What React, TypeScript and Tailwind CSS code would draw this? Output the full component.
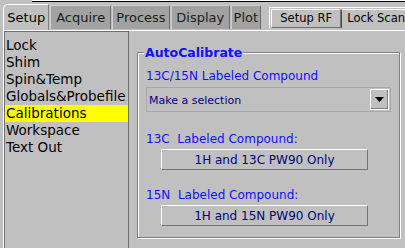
import React from 'react';

const items = ['Lock', 'Shim', 'Spin&Temp', 'Globals&Probefile', 'Calibrations', 'Workspace', 'Text Out'];
const tabs = [
  { label: 'Acquire', w: 'w-[61px]' },
  { label: 'Process', w: 'w-[59px]' },
  { label: 'Display', w: 'w-[59px]' },
  { label: 'Plot', w: 'w-[31px]' },
];

function PanelButton({ label }: { label: string }) {
  return (
    <div className="ml-[15px] w-[207px] h-[21px] flex items-center justify-center border-t border-l border-white border-b border-r border-b-[#747474] border-r-[#747474] bg-[#c0c0c0] text-[12px] leading-[14px] text-[#000080]">
      {label}
    </div>
  );
}

export default function App() {
  return (
    <div className="w-[405px] h-[248px] overflow-hidden bg-[#c0c0c0] flex flex-col" style={{ fontFamily: '"DejaVu Sans", sans-serif' }}>
      {/* strip above the tabs */}
      <div className="flex shrink-0">
        <div className="w-[32px]" />
        <div className="flex-1 border-t border-white border-b border-b-black" />
      </div>

      {/* tab row */}
      <div className="flex items-start h-[28px] pl-[3px] shrink-0">
        <div className="mt-[2px] w-[47px] h-[26px] flex items-center justify-center bg-[#c0c0c0] border-t border-l border-white border-r border-r-[#808080] rounded-tl-[5px] text-[13px] text-black">
          Setup
        </div>
        {tabs.map((t) => (
          <div
            key={t.label}
            className={`${t.w} ml-[1px] mt-[3px] h-[24px] flex items-center justify-center bg-[#a2a2a2] border-t border-l border-[#cfcfcf] border-r border-r-[#6c6c6c] rounded-tr-[2px] text-[13px] text-[#1c1c1c]`}
          >
            {t.label}
          </div>
        ))}
        <div className="ml-[8px] mt-[5px] flex-1 flex border-t border-l border-white pt-[1px] pl-[1px]">
          <div className="w-[70px] h-[19px] flex items-center justify-center border-t border-l border-white border-b border-r border-b-[#6f6f6f] border-r-[#6f6f6f] text-[11.5px] text-black">
            Setup RF
          </div>
          <div className="flex-1 h-[19px] flex items-center pl-[5px] border-t border-white border-l border-l-[#505050] text-[11.5px] text-black whitespace-nowrap">
            Lock Scan
          </div>
        </div>
      </div>

      {/* body */}
      <div className="flex-1 flex ml-[3px] border-t border-l border-white">
        <div className="w-[125px] border-t border-l border-r border-[#6e6e6e] pt-[5px] flex flex-col">
          {items.map((it) => (
            <div
              key={it}
              className={`h-[17px] leading-[17px] pl-[1px] text-[13.5px] text-black whitespace-nowrap ${it === 'Calibrations' ? 'bg-[#ffff00]' : ''}`}
            >
              {it}
            </div>
          ))}
        </div>

        <div className="flex-1 pl-[8px] pt-[14px]">
          <fieldset className="w-[263px] h-[193px] border border-[#808080] shadow-[1px_1px_0_#ffffff,inset_1px_1px_0_#ffffff]">
            <legend className="ml-[6px] px-[1px] bg-[#c0c0c0] text-[12.5px] leading-[15px] font-bold text-[#1010ff]">
              AutoCalibrate
            </legend>
            <div className="flex flex-col px-[8px]">
              <div className="mt-[9px] text-[12px] leading-[14px] text-[#1010ff]">13C/15N Labeled Compound</div>
              <div className="mt-[4px] h-[25px] flex items-center border border-[#a6a6b6] pl-[2px]">
                <div className="flex-1 pt-[3px] text-[11px] text-[#000080]">Make a selection</div>
                <div className="w-[19px] h-[21px] mr-[1px] flex items-center justify-center border-t border-l border-white border-b border-r border-black shadow-[inset_-1px_-1px_0_#808080]">
                  <svg width="9" height="5" viewBox="0 0 9 5">
                    <polygon points="0,0 9,0 4.5,5" fill="#000" />
                  </svg>
                </div>
              </div>
              <div className="mt-[20px] text-[12px] leading-[14px] text-[#1010ff] whitespace-pre">13C  Labeled Compound:</div>
              <div className="mt-[3px]">
                <PanelButton label="1H and 13C PW90 Only" />
              </div>
              <div className="mt-[18px] text-[12px] leading-[14px] text-[#1010ff] whitespace-pre">15N  Labeled Compound:</div>
              <div className="mt-[3px]">
                <PanelButton label="1H and 15N PW90 Only" />
              </div>
            </div>
          </fieldset>
        </div>
      </div>
    </div>
  );
}
